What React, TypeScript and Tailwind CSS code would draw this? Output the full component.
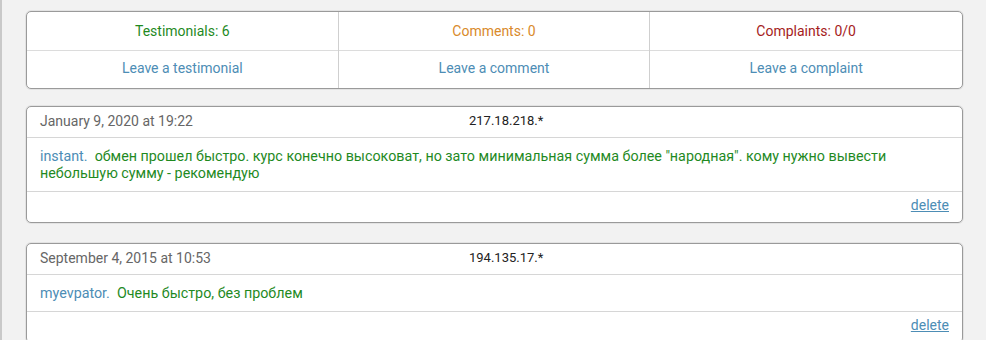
const stats = [
  { label: "Testimonials: 6", color: "text-[#1f8a1f]", link: "Leave a testimonial" },
  { label: "Comments: 0", color: "text-[#d98a2b]", link: "Leave a comment" },
  { label: "Complaints: 0/0", color: "text-[#a51c1c]", link: "Leave a complaint" },
];

type Review = {
  date: string;
  ip: string;
  user: string;
  text: string;
};

const reviews: Review[] = [
  {
    date: "January 9, 2020 at 19:22",
    ip: "217.18.218.*",
    user: "instant.",
    text: "обмен прошел быстро. курс конечно высоковат, но зато минимальная сумма более \"народная\". кому нужно вывести небольшую сумму - рекомендую",
  },
  {
    date: "September 4, 2015 at 10:53",
    ip: "194.135.17.*",
    user: "myevpator.",
    text: "Очень быстро, без проблем",
  },
];

function ReviewCard({ r }: { r: Review }) {
  return (
    <div className="bg-white border border-[#9a9a9a] rounded-[5px] shadow-[0_0_0_1px_rgba(0,0,0,0.06)]">
      <div className="flex items-center h-[31px] pb-[2px] border-b border-[#d6d6d6]">
        <div className="w-[442px] pl-[13px] text-[14px] text-[#666]">{r.date}</div>
        <div className="text-[13px] text-[#222]">{r.ip}</div>
      </div>
      <p className="pl-[13px] pr-[40px] pt-[10px] pb-[9px] text-[14.3px] leading-[17px] border-b border-[#d6d6d6]">
        <span className="text-[#4d8db5]">{r.user}</span>{" "}
        <span className="text-[#1f8a1f]">&nbsp;{r.text}</span>
      </p>
      <div className="flex justify-end items-center h-[30px] pb-[3px] pr-[13px]">
        <a href="#" className="text-[14px] text-[#4d8db5] underline">delete</a>
      </div>
    </div>
  );
}

export default function App() {
  return (
    <div
      className="min-h-[340px] bg-[#f2f2f2] border-l-2 border-[#c9c9c9] pl-[24px] pr-[23px] pt-[11px]"
      style={{ fontFamily: "Roboto, 'Noto Sans', sans-serif" }}
    >
      <div className="grid grid-cols-3 bg-white border border-[#9a9a9a] rounded-[5px] shadow-[0_0_0_1px_rgba(0,0,0,0.06)] text-[14px]">
        {stats.map((s, i) => (
          <div key={s.label} className={i < 2 ? "border-r border-[#cfcfcf]" : ""}>
            <div className={`h-[39px] flex items-center justify-center border-b border-[#dcdcdc] ${s.color}`}>
              {s.label}
            </div>
            <div className="h-[37px] pb-[3px] flex items-center justify-center">
              <a href="#" className="text-[#4d8db5]">{s.link}</a>
            </div>
          </div>
        ))}
      </div>

      <div className="flex flex-col gap-[20px] mt-[17px]">
        {reviews.map((r) => (
          <ReviewCard key={r.date} r={r} />
        ))}
      </div>
    </div>
  );
}
